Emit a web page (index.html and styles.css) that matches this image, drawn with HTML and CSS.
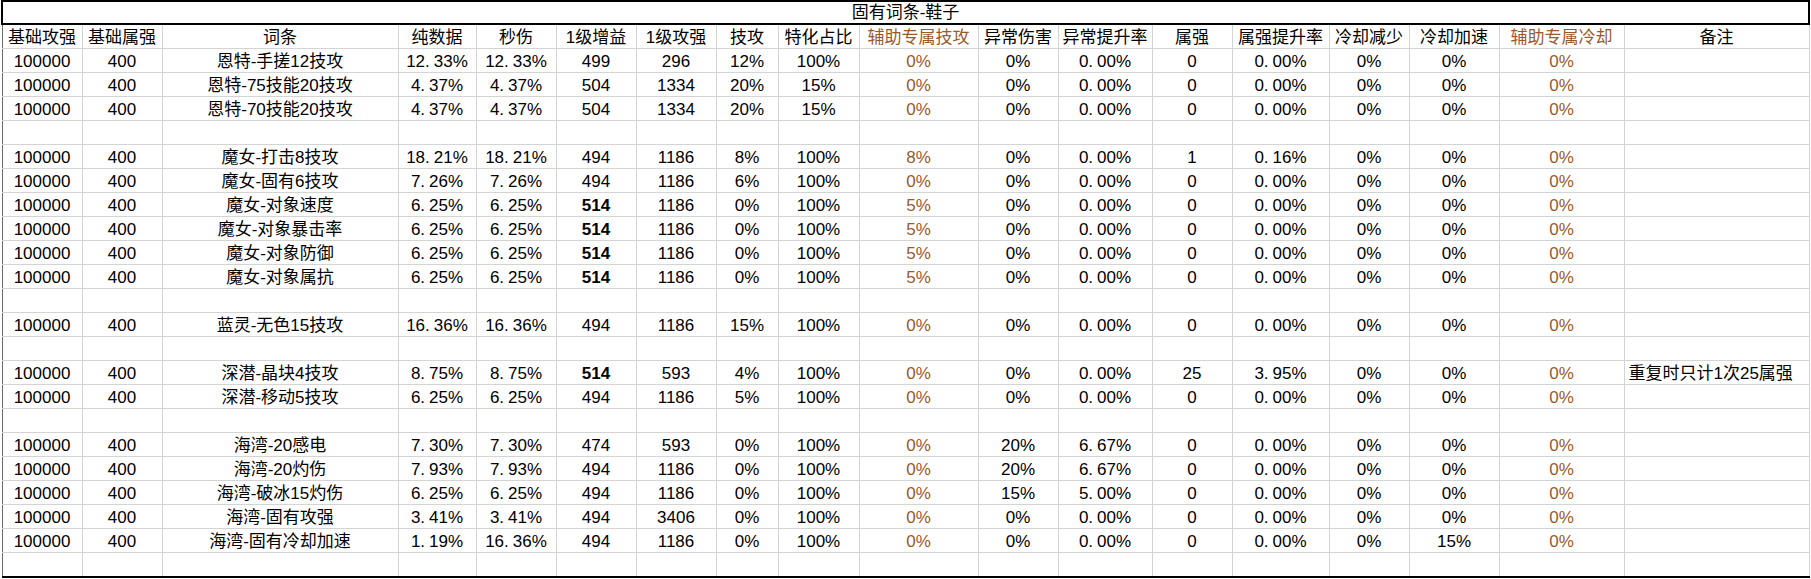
FILE: index.html
```html
<!DOCTYPE html>
<html lang="zh-CN">
<head>
<meta charset="utf-8">
<title>固有词条-鞋子</title>
<link rel="stylesheet" href="styles.css">
</head>
<body>
<table class="sheet">
<colgroup>
<col class="w80"><col class="w80"><col class="w236"><col class="w78"><col class="w80"><col class="w80"><col class="w80"><col class="w62"><col class="w81"><col class="w119"><col class="w80"><col class="w94"><col class="w80"><col class="w97"><col class="w80"><col class="w90"><col class="w125"><col class="w185">
</colgroup>
<tr class="sliver"><td></td><td></td><td></td><td></td><td></td><td></td><td></td><td></td><td></td><td></td><td></td><td></td><td></td><td></td><td></td><td></td><td></td><td></td></tr>
<tr class="title"><td colspan="18">固有词条-鞋子</td></tr>
<tr class="head"><td>基础攻强</td><td>基础属强</td><td>词条</td><td>纯数据</td><td>秒伤</td><td>1级增益</td><td>1级攻强</td><td>技攻</td><td>特化占比</td><td class="br">辅助专属技攻</td><td>异常伤害</td><td>异常提升率</td><td>属强</td><td>属强提升率</td><td>冷却减少</td><td>冷却加速</td><td class="br">辅助专属冷却</td><td>备注</td></tr>
<tr><td>100000</td><td>400</td><td>恩特-手搓12技攻</td><td>12<span class="dp">.</span>33%</td><td>12<span class="dp">.</span>33%</td><td>499</td><td>296</td><td>12%</td><td>100%</td><td class="br">0%</td><td>0%</td><td>0<span class="dp">.</span>00%</td><td>0</td><td>0<span class="dp">.</span>00%</td><td>0%</td><td>0%</td><td class="br">0%</td><td class="note"></td></tr>
<tr><td>100000</td><td>400</td><td>恩特-75技能20技攻</td><td>4<span class="dp">.</span>37%</td><td>4<span class="dp">.</span>37%</td><td>504</td><td>1334</td><td>20%</td><td>15%</td><td class="br">0%</td><td>0%</td><td>0<span class="dp">.</span>00%</td><td>0</td><td>0<span class="dp">.</span>00%</td><td>0%</td><td>0%</td><td class="br">0%</td><td class="note"></td></tr>
<tr><td>100000</td><td>400</td><td>恩特-70技能20技攻</td><td>4<span class="dp">.</span>37%</td><td>4<span class="dp">.</span>37%</td><td>504</td><td>1334</td><td>20%</td><td>15%</td><td class="br">0%</td><td>0%</td><td>0<span class="dp">.</span>00%</td><td>0</td><td>0<span class="dp">.</span>00%</td><td>0%</td><td>0%</td><td class="br">0%</td><td class="note"></td></tr>
<tr><td></td><td></td><td></td><td></td><td></td><td></td><td></td><td></td><td></td><td></td><td></td><td></td><td></td><td></td><td></td><td></td><td></td><td></td></tr>
<tr><td>100000</td><td>400</td><td>魔女-打击8技攻</td><td>18<span class="dp">.</span>21%</td><td>18<span class="dp">.</span>21%</td><td>494</td><td>1186</td><td>8%</td><td>100%</td><td class="br">8%</td><td>0%</td><td>0<span class="dp">.</span>00%</td><td>1</td><td>0<span class="dp">.</span>16%</td><td>0%</td><td>0%</td><td class="br">0%</td><td class="note"></td></tr>
<tr><td>100000</td><td>400</td><td>魔女-固有6技攻</td><td>7<span class="dp">.</span>26%</td><td>7<span class="dp">.</span>26%</td><td>494</td><td>1186</td><td>6%</td><td>100%</td><td class="br">0%</td><td>0%</td><td>0<span class="dp">.</span>00%</td><td>0</td><td>0<span class="dp">.</span>00%</td><td>0%</td><td>0%</td><td class="br">0%</td><td class="note"></td></tr>
<tr><td>100000</td><td>400</td><td>魔女-对象速度</td><td>6<span class="dp">.</span>25%</td><td>6<span class="dp">.</span>25%</td><td class="bold">514</td><td>1186</td><td>0%</td><td>100%</td><td class="br">5%</td><td>0%</td><td>0<span class="dp">.</span>00%</td><td>0</td><td>0<span class="dp">.</span>00%</td><td>0%</td><td>0%</td><td class="br">0%</td><td class="note"></td></tr>
<tr><td>100000</td><td>400</td><td>魔女-对象暴击率</td><td>6<span class="dp">.</span>25%</td><td>6<span class="dp">.</span>25%</td><td class="bold">514</td><td>1186</td><td>0%</td><td>100%</td><td class="br">5%</td><td>0%</td><td>0<span class="dp">.</span>00%</td><td>0</td><td>0<span class="dp">.</span>00%</td><td>0%</td><td>0%</td><td class="br">0%</td><td class="note"></td></tr>
<tr><td>100000</td><td>400</td><td>魔女-对象防御</td><td>6<span class="dp">.</span>25%</td><td>6<span class="dp">.</span>25%</td><td class="bold">514</td><td>1186</td><td>0%</td><td>100%</td><td class="br">5%</td><td>0%</td><td>0<span class="dp">.</span>00%</td><td>0</td><td>0<span class="dp">.</span>00%</td><td>0%</td><td>0%</td><td class="br">0%</td><td class="note"></td></tr>
<tr><td>100000</td><td>400</td><td>魔女-对象属抗</td><td>6<span class="dp">.</span>25%</td><td>6<span class="dp">.</span>25%</td><td class="bold">514</td><td>1186</td><td>0%</td><td>100%</td><td class="br">5%</td><td>0%</td><td>0<span class="dp">.</span>00%</td><td>0</td><td>0<span class="dp">.</span>00%</td><td>0%</td><td>0%</td><td class="br">0%</td><td class="note"></td></tr>
<tr><td></td><td></td><td></td><td></td><td></td><td></td><td></td><td></td><td></td><td></td><td></td><td></td><td></td><td></td><td></td><td></td><td></td><td></td></tr>
<tr><td>100000</td><td>400</td><td>蓝灵-无色15技攻</td><td>16<span class="dp">.</span>36%</td><td>16<span class="dp">.</span>36%</td><td>494</td><td>1186</td><td>15%</td><td>100%</td><td class="br">0%</td><td>0%</td><td>0<span class="dp">.</span>00%</td><td>0</td><td>0<span class="dp">.</span>00%</td><td>0%</td><td>0%</td><td class="br">0%</td><td class="note"></td></tr>
<tr><td></td><td></td><td></td><td></td><td></td><td></td><td></td><td></td><td></td><td></td><td></td><td></td><td></td><td></td><td></td><td></td><td></td><td></td></tr>
<tr><td>100000</td><td>400</td><td>深潜-晶块4技攻</td><td>8<span class="dp">.</span>75%</td><td>8<span class="dp">.</span>75%</td><td class="bold">514</td><td>593</td><td>4%</td><td>100%</td><td class="br">0%</td><td>0%</td><td>0<span class="dp">.</span>00%</td><td>25</td><td>3<span class="dp">.</span>95%</td><td>0%</td><td>0%</td><td class="br">0%</td><td class="note">重复时只计1次25属强</td></tr>
<tr><td>100000</td><td>400</td><td>深潜-移动5技攻</td><td>6<span class="dp">.</span>25%</td><td>6<span class="dp">.</span>25%</td><td>494</td><td>1186</td><td>5%</td><td>100%</td><td class="br">0%</td><td>0%</td><td>0<span class="dp">.</span>00%</td><td>0</td><td>0<span class="dp">.</span>00%</td><td>0%</td><td>0%</td><td class="br">0%</td><td class="note"></td></tr>
<tr><td></td><td></td><td></td><td></td><td></td><td></td><td></td><td></td><td></td><td></td><td></td><td></td><td></td><td></td><td></td><td></td><td></td><td></td></tr>
<tr><td>100000</td><td>400</td><td>海湾-20感电</td><td>7<span class="dp">.</span>30%</td><td>7<span class="dp">.</span>30%</td><td>474</td><td>593</td><td>0%</td><td>100%</td><td class="br">0%</td><td>20%</td><td>6<span class="dp">.</span>67%</td><td>0</td><td>0<span class="dp">.</span>00%</td><td>0%</td><td>0%</td><td class="br">0%</td><td class="note"></td></tr>
<tr><td>100000</td><td>400</td><td>海湾-20灼伤</td><td>7<span class="dp">.</span>93%</td><td>7<span class="dp">.</span>93%</td><td>494</td><td>1186</td><td>0%</td><td>100%</td><td class="br">0%</td><td>20%</td><td>6<span class="dp">.</span>67%</td><td>0</td><td>0<span class="dp">.</span>00%</td><td>0%</td><td>0%</td><td class="br">0%</td><td class="note"></td></tr>
<tr><td>100000</td><td>400</td><td>海湾-破冰15灼伤</td><td>6<span class="dp">.</span>25%</td><td>6<span class="dp">.</span>25%</td><td>494</td><td>1186</td><td>0%</td><td>100%</td><td class="br">0%</td><td>15%</td><td>5<span class="dp">.</span>00%</td><td>0</td><td>0<span class="dp">.</span>00%</td><td>0%</td><td>0%</td><td class="br">0%</td><td class="note"></td></tr>
<tr><td>100000</td><td>400</td><td>海湾-固有攻强</td><td>3<span class="dp">.</span>41%</td><td>3<span class="dp">.</span>41%</td><td>494</td><td>3406</td><td>0%</td><td>100%</td><td class="br">0%</td><td>0%</td><td>0<span class="dp">.</span>00%</td><td>0</td><td>0<span class="dp">.</span>00%</td><td>0%</td><td>0%</td><td class="br">0%</td><td class="note"></td></tr>
<tr><td>100000</td><td>400</td><td>海湾-固有冷却加速</td><td>1<span class="dp">.</span>19%</td><td>16<span class="dp">.</span>36%</td><td>494</td><td>1186</td><td>0%</td><td>100%</td><td class="br">0%</td><td>0%</td><td>0<span class="dp">.</span>00%</td><td>0</td><td>0<span class="dp">.</span>00%</td><td>0%</td><td>15%</td><td class="br">0%</td><td class="note"></td></tr>
<tr class="last"><td></td><td></td><td></td><td></td><td></td><td></td><td></td><td></td><td></td><td></td><td></td><td></td><td></td><td></td><td></td><td></td><td></td><td></td></tr>
</table>
</body>
</html>
```

FILE: styles.css
```css
html, body {
  margin: 0;
  padding: 0;
  background: #ffffff;
}

body {
  font-family: "Liberation Sans", "Noto Sans CJK SC", sans-serif;
  font-size: 17px;
  color: #000000;
}

.sheet {
  border-collapse: collapse;
  table-layout: fixed;
  width: 1808px;
  margin-left: 1px;
}

.w62 { width: 62px; }
.w78 { width: 78px; }
.w80 { width: 80px; }
.w81 { width: 81px; }
.w90 { width: 90px; }
.w94 { width: 94px; }
.w97 { width: 97px; }
.w119 { width: 119px; }
.w125 { width: 125px; }
.w185 { width: 185px; }
.w236 { width: 236px; }

.sheet td {
  border: 1px solid #d4d4d4;
  height: 23px;
  padding: 0 2px;
  line-height: 20px;
  text-align: center;
  vertical-align: bottom;
  white-space: nowrap;
  overflow: hidden;
}

.sheet td:first-child {
  border-left: 1px solid #6a6a6a;
}

.sheet tr.sliver td {
  height: 0;
  line-height: 0;
  font-size: 0;
  padding: 0;
  border-top: none;
  border-bottom: none;
}

.sheet tr.title td {
  border: 2px solid #000000;
  height: 21px;
  line-height: 20px;
}

.sheet tr.last td {
  border-bottom: 2px solid #000000;
}

.sheet td.note {
  text-align: left;
  padding-left: 4px;
}

.br {
  color: #98592b;
}

.bold {
  font-weight: bold;
}

.dp {
  padding-right: 4px;
}
```
